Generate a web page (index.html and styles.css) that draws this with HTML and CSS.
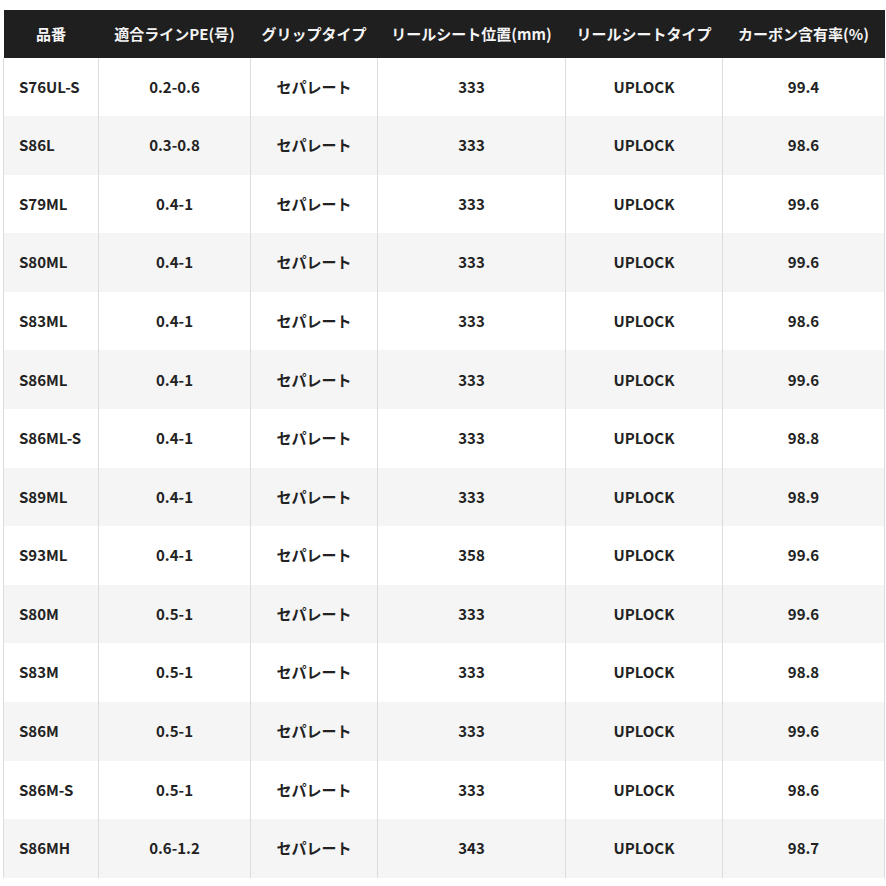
FILE: index.html
```html
<!DOCTYPE html>
<html lang="ja">
<head>
<meta charset="utf-8">
<title>スペック</title>
<link rel="stylesheet" href="styles.css">
</head>
<body>
<div class="wrap">
<table class="spec">
<colgroup>
<col class="c1"><col class="c2"><col class="c3"><col class="c4"><col class="c5"><col class="c6">
</colgroup>
<thead>
<tr><th>品番</th><th>適合ラインPE(号)</th><th>グリップタイプ</th><th>リールシート位置(mm)</th><th>リールシートタイプ</th><th>カーボン含有率(%)</th></tr>
</thead>
<tbody>
<tr><td>S76UL-S</td><td>0.2-0.6</td><td>セパレート</td><td>333</td><td>UPLOCK</td><td>99.4</td></tr>
<tr><td>S86L</td><td>0.3-0.8</td><td>セパレート</td><td>333</td><td>UPLOCK</td><td>98.6</td></tr>
<tr><td>S79ML</td><td>0.4-1</td><td>セパレート</td><td>333</td><td>UPLOCK</td><td>99.6</td></tr>
<tr><td>S80ML</td><td>0.4-1</td><td>セパレート</td><td>333</td><td>UPLOCK</td><td>99.6</td></tr>
<tr><td>S83ML</td><td>0.4-1</td><td>セパレート</td><td>333</td><td>UPLOCK</td><td>98.6</td></tr>
<tr><td>S86ML</td><td>0.4-1</td><td>セパレート</td><td>333</td><td>UPLOCK</td><td>99.6</td></tr>
<tr><td>S86ML-S</td><td>0.4-1</td><td>セパレート</td><td>333</td><td>UPLOCK</td><td>98.8</td></tr>
<tr><td>S89ML</td><td>0.4-1</td><td>セパレート</td><td>333</td><td>UPLOCK</td><td>98.9</td></tr>
<tr><td>S93ML</td><td>0.4-1</td><td>セパレート</td><td>358</td><td>UPLOCK</td><td>99.6</td></tr>
<tr><td>S80M</td><td>0.5-1</td><td>セパレート</td><td>333</td><td>UPLOCK</td><td>99.6</td></tr>
<tr><td>S83M</td><td>0.5-1</td><td>セパレート</td><td>333</td><td>UPLOCK</td><td>98.8</td></tr>
<tr><td>S86M</td><td>0.5-1</td><td>セパレート</td><td>333</td><td>UPLOCK</td><td>99.6</td></tr>
<tr><td>S86M-S</td><td>0.5-1</td><td>セパレート</td><td>333</td><td>UPLOCK</td><td>98.6</td></tr>
<tr><td>S86MH</td><td>0.6-1.2</td><td>セパレート</td><td>343</td><td>UPLOCK</td><td>98.7</td></tr>
</tbody>
</table>
</div>
</body>
</html>
```
FILE: styles.css
```css
html, body {
  margin: 0;
  padding: 0;
  background: #ffffff;
}
.wrap {
  padding: 10px 2px 0 3px;
}
.spec {
  width: 881px;
  border-collapse: collapse;
  table-layout: fixed;
  font-family: "Noto Sans CJK JP", "Noto Sans", sans-serif;
  font-weight: 700;
  font-size: 15px;
  line-height: 22.5px;
  color: #222222;
}
.c1 { width: 95px; }
.c2 { width: 152px; }
.c3 { width: 127px; }
.c4 { width: 188px; }
.c5 { width: 157px; }
.c6 { width: 162px; }
.spec th {
  background: #1f1f1f;
  color: #f4f4f4;
  padding: 12.5px 0;
  text-align: center;
  font-weight: 700;
  white-space: nowrap;
}
.spec td {
  padding: 18.05px 0;
  text-align: center;
  border-left: 1px solid #dcdcdc;
  border-right: 1px solid #dcdcdc;
}
.spec td:first-child {
  text-align: left;
  padding-left: 15px;
}
.spec tbody tr:nth-child(even) td {
  background: #f5f5f5;
}
```
